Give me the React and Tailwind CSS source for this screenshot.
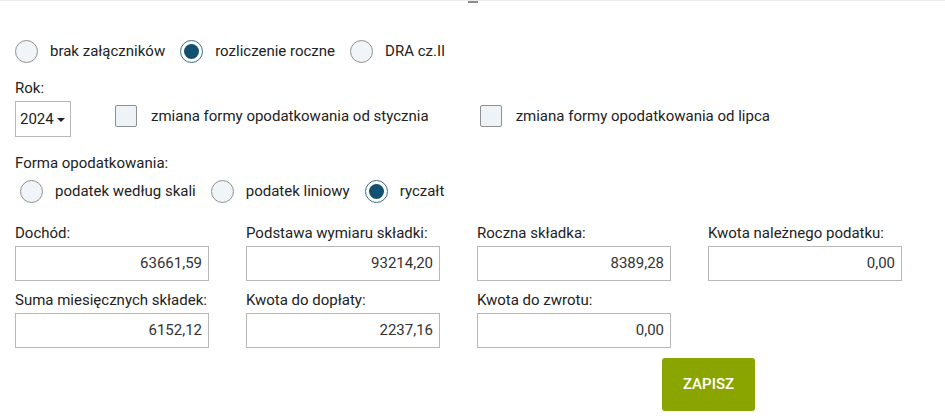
import { useState } from 'react';

function Radio({ checked, label, onClick }) {
  return (
    <button type="button" onClick={onClick} className="flex items-center gap-[12px] mr-[15px]">
      {checked ? (
        <span className="flex h-[23px] w-[23px] items-center justify-center rounded-full border-[1.5px] border-[#3d6b85] bg-white">
          <span className="h-[15px] w-[15px] rounded-full bg-[#11506f]" />
        </span>
      ) : (
        <span className="h-[23px] w-[23px] rounded-full border border-[#8f8f8f] bg-[#f1f5f9]" />
      )}
      <span className="leading-[20px]">{label}</span>
    </button>
  );
}

function Checkbox({ label }) {
  const [on, setOn] = useState(false);
  return (
    <button type="button" onClick={() => setOn(!on)} className="flex items-center gap-[14px]">
      <span className="flex h-[22px] w-[22px] items-center justify-center rounded-[2px] border border-[#8f8f8f] bg-[#eef3f8] text-[13px] text-[#11506f]">
        {on ? '✓' : ''}
      </span>
      <span className="leading-[20px]">{label}</span>
    </button>
  );
}

function Field({ label, value }) {
  return (
    <div className="flex flex-col">
      <div className="h-[20px] leading-[20px] whitespace-nowrap">{label}</div>
      <div className="mt-[3px] flex h-[35px] items-center justify-end border border-[#b8b8b8] bg-white pr-[6px] text-[#333]">
        {value}
      </div>
    </div>
  );
}

export default function App() {
  const [kind, setKind] = useState('roczne');
  const [forma, setForma] = useState('ryczalt');

  return (
    <div className="h-[418px] w-[945px] overflow-hidden border-t border-[#ececec] bg-white font-['Roboto',sans-serif] text-[15px] text-[#222]">
      <div className="flex h-0 justify-center">
        <div className="-mt-px h-[3px] w-[10px] bg-[#8c8c8c]" />
      </div>

      <div className="pl-[15px]">
        <div className="mt-[38px] flex h-[24px] items-center">
          <Radio checked={kind === 'brak'} label="brak załączników" onClick={() => setKind('brak')} />
          <Radio checked={kind === 'roczne'} label="rozliczenie roczne" onClick={() => setKind('roczne')} />
          <Radio checked={kind === 'dra'} label="DRA cz.II" onClick={() => setKind('dra')} />
        </div>

        <div className="mt-[15px] h-[20px] leading-[20px]">Rok:</div>
        <div className="mt-[3px] flex items-start">
          <div className="flex h-[36px] w-[56px] items-center gap-[3px] border border-[#b8b8b8] pl-[4px]">
            <span>2024</span>
            <span className="mt-[1px] h-0 w-0 border-x-[4px] border-t-[4px] border-x-transparent border-t-[#222]" />
          </div>
          <div className="ml-[44px] mt-[4px] flex items-center">
            <Checkbox label="zmiana formy opodatkowania od stycznia" />
            <div className="ml-[51px]">
              <Checkbox label="zmiana formy opodatkowania od lipca" />
            </div>
          </div>
        </div>

        <div className="mt-[16px] h-[20px] leading-[20px]">Forma opodatkowania:</div>
        <div className="mt-[6px] flex h-[24px] items-center pl-[5px]">
          <Radio checked={forma === 'skala'} label="podatek według skali" onClick={() => setForma('skala')} />
          <Radio checked={forma === 'liniowy'} label="podatek liniowy" onClick={() => setForma('liniowy')} />
          <Radio checked={forma === 'ryczalt'} label="ryczałt" onClick={() => setForma('ryczalt')} />
        </div>

        <div className="mt-[20px] grid grid-cols-[194px_194px_194px_194px] gap-x-[37px] gap-y-[9px]">
          <Field label="Dochód:" value="63661,59" />
          <Field label="Podstawa wymiaru składki:" value="93214,20" />
          <Field label="Roczna składka:" value="8389,28" />
          <Field label="Kwota należnego podatku:" value="0,00" />
          <Field label="Suma miesięcznych składek:" value="6152,12" />
          <Field label="Kwota do dopłaty:" value="2237,16" />
          <Field label="Kwota do zwrotu:" value="0,00" />
        </div>

        <div className="mt-[10px] pl-[647px]">
          <button
            type="button"
            className="h-[53px] w-[93px] rounded-[3px] bg-[#8ba500] font-medium text-white"
          >
            ZAPISZ
          </button>
        </div>
      </div>
    </div>
  );
}
